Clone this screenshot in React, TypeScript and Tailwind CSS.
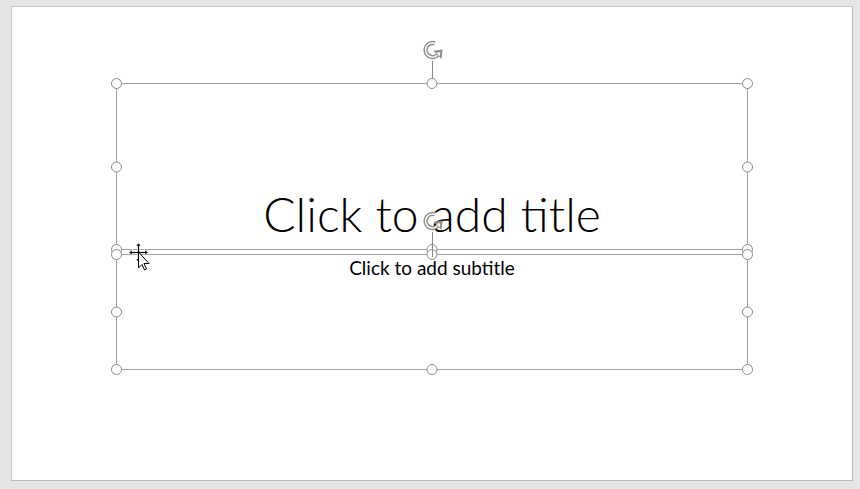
import React from "react";

const handle = "absolute h-[11px] w-[11px] rounded-full border-[1.5px] border-[#8a8a8a] bg-white";

function Handles() {
  return (
    <>
      <div className={`${handle} -left-[6px] -top-[6px]`} />
      <div className={`${handle} left-1/2 -top-[6px] -translate-x-1/2`} />
      <div className={`${handle} -right-[6px] -top-[6px]`} />
      <div className={`${handle} -left-[6px] top-1/2 -translate-y-1/2`} />
      <div className={`${handle} -right-[6px] top-1/2 -translate-y-1/2`} />
      <div className={`${handle} -bottom-[6px] -left-[6px]`} />
      <div className={`${handle} -bottom-[6px] left-1/2 -translate-x-1/2`} />
      <div className={`${handle} -bottom-[6px] -right-[6px]`} />
    </>
  );
}

// circular arrow, drawn as a grey outline with a white core like PowerPoint's rotate grip
function RotateIcon() {
  const arc = "M14.4 5.4 A7 7 0 1 0 17 17";
  return (
    <svg width="26" height="26" viewBox="-1.5 0 26 26" className="block">
      <path d={arc} fill="none" stroke="#8f8f8f" strokeWidth="4.4" />
      <path d={arc} fill="none" stroke="#ffffff" strokeWidth="1.5" />
      <path d="M12.8 12.8 L22.2 11.6 L21 21 Z" fill="#8f8f8f" />
      <path d="M15.8 14.8 L19.8 14.3 L19.3 18.3 Z" fill="#ffffff" />
    </svg>
  );
}

function RotateHandle({ stem }: { stem: string }) {
  return (
    <div className="absolute -top-[46px] left-1/2 flex -translate-x-1/2 flex-col items-center">
      <RotateIcon />
      <div className={`-mt-[3px] w-px bg-[#8a8a8a] ${stem}`} />
    </div>
  );
}

export default function App() {
  const font = { fontFamily: '"Lato", "Open Sans", sans-serif' };
  return (
    <div className="relative flex h-[489px] w-[860px] items-start overflow-hidden bg-[#e6e6e6] pl-[11px] pt-[6px]">
      <div className="flex h-[475px] w-[842px] flex-col border border-[#c8c8c8] border-b-[#b8b8b8] border-r-[#b8b8b8] bg-white pl-[104px] pt-[76px]">
        {/* title placeholder */}
        <div className="relative flex h-[167px] w-[632px] items-end justify-center border border-[#a3a3a3] pb-[11px]">
          <span className="text-[48px] font-light leading-none text-black" style={font}>
            Click to add title
          </span>
          <RotateHandle stem="h-[23px]" />
          <Handles />
        </div>

        {/* subtitle placeholder */}
        <div className="relative mt-[4px] flex h-[116px] w-[632px] justify-center border border-[#a3a3a3] pt-[3px]">
          <span className="text-[19px] leading-none text-black" style={font}>
            Click to add subtitle
          </span>
          <Handles />
          <RotateHandle stem="h-[25px]" />
        </div>
      </div>

      {/* move cursor */}
      <svg className="absolute left-[128px] top-[242px]" width="24" height="32" viewBox="0 0 24 32">
        <path d="M10.5 1 L13.5 4 H11.5 V9.5 H17 V7.5 L20 10.5 L17 13.5 V11.5 H11.5 V17 H13.5 L10.5 20 L7.5 17 H9.5 V11.5 H4 V13.5 L1 10.5 L4 7.5 V9.5 H9.5 V4 H7.5 Z" fill="#000" stroke="#fff" strokeWidth="0.8" />
        <path d="M10.5 10 V26 L14 22.5 L16.5 28 L18.5 27 L16 21.5 H21 Z" fill="#fff" stroke="#000" strokeWidth="1" />
      </svg>
    </div>
  );
}
